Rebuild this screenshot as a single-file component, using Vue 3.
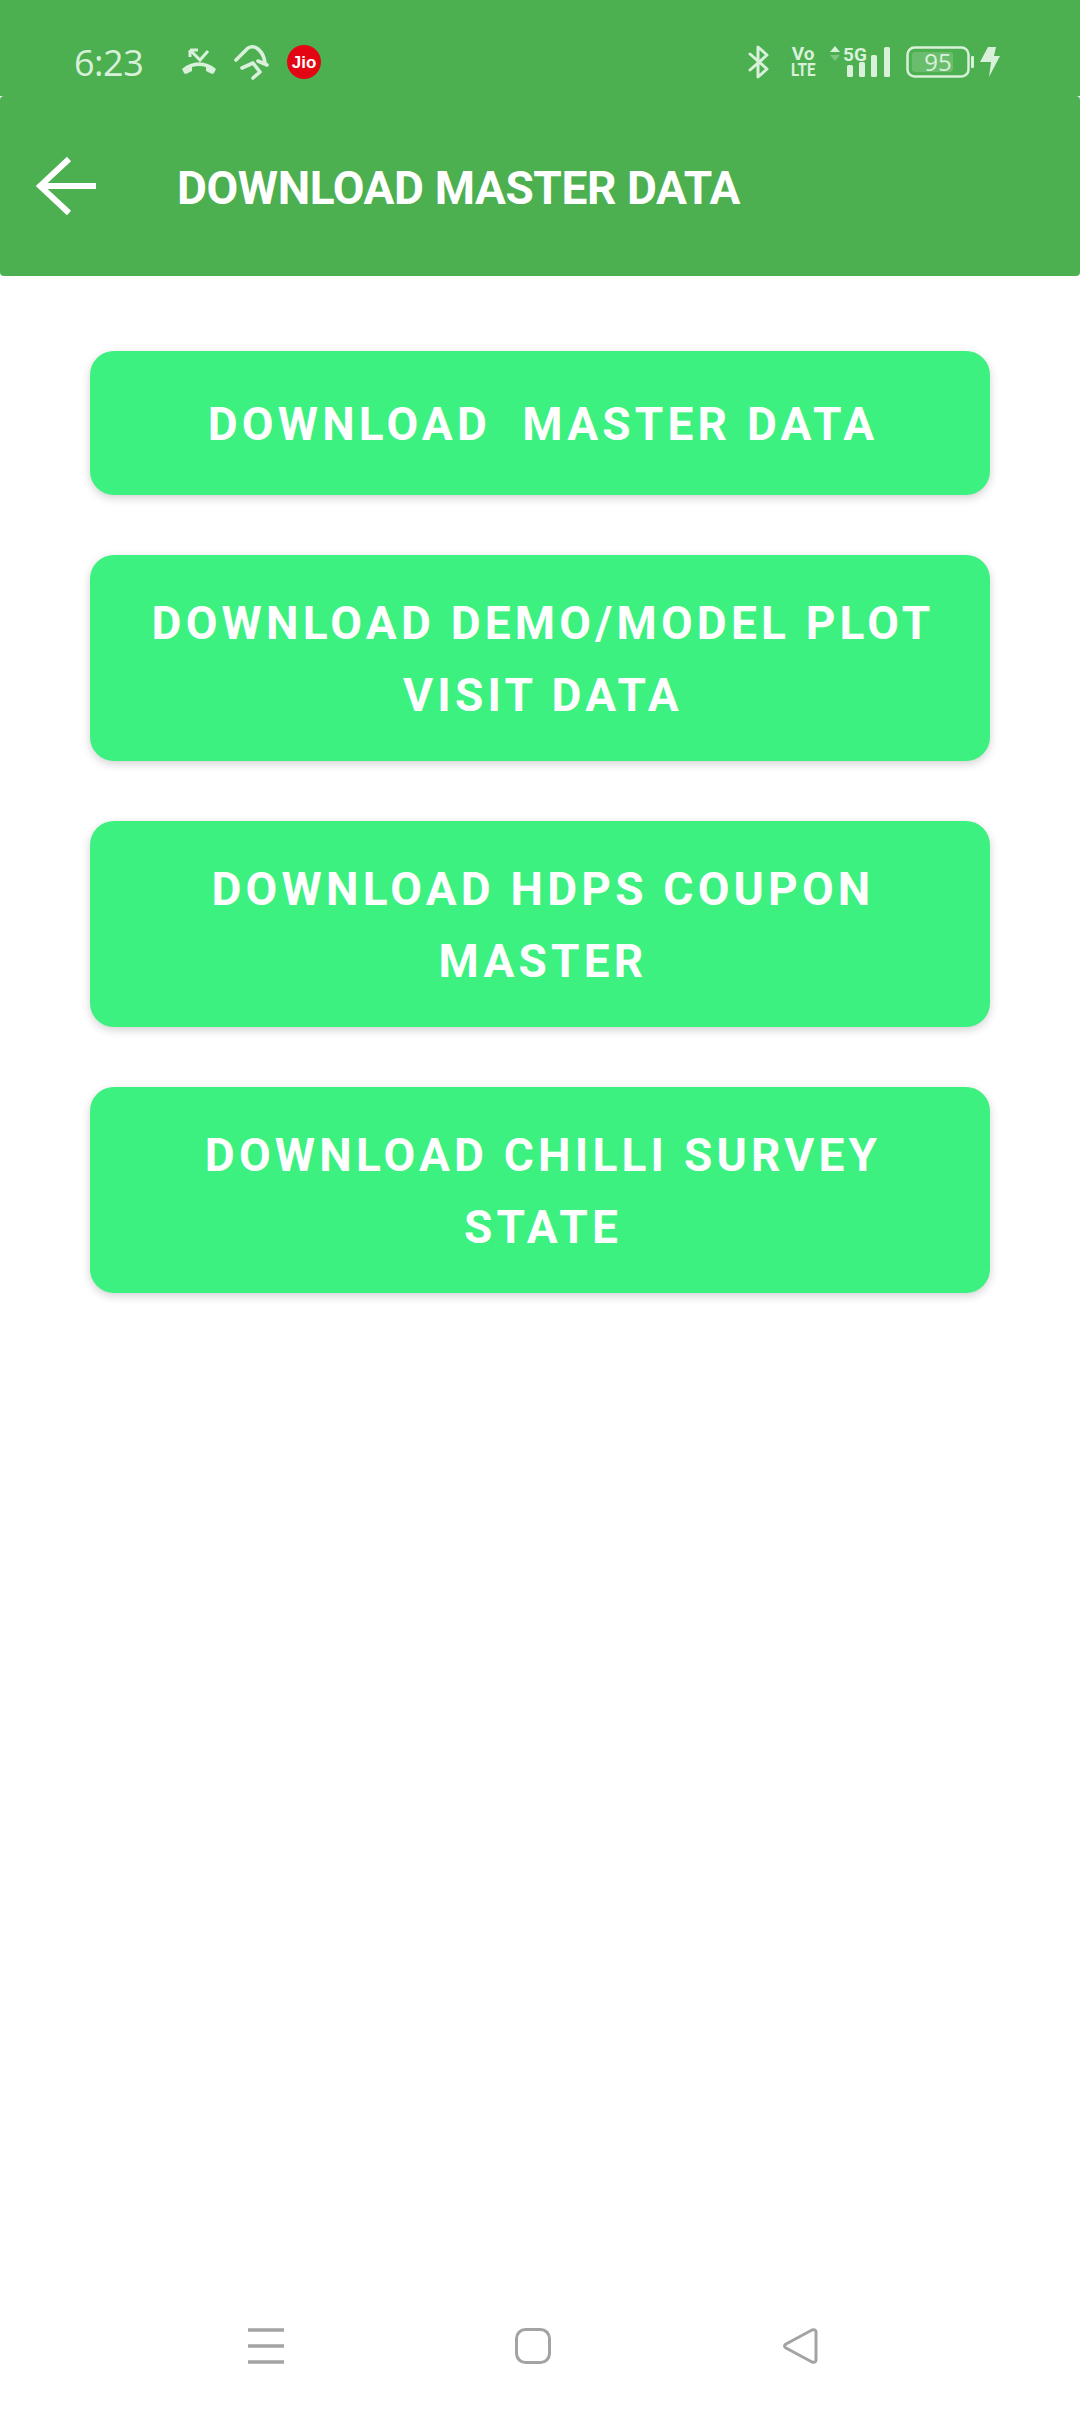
<template>
  <div class="page">
    <header class="header">
      <div class="status">
        <span class="time">6:23</span>
        <svg class="ic-call" width="36" height="28" viewBox="0 0 36 28">
          <path d="M9 2v7M9 2h8M9 2l10 10L27 3" fill="none" stroke="#d9f0da" stroke-width="3" />
          <path d="M1 21c10-9 24-9 34 0l-2 4c-1 1-2 1-3 .5l-5-2.500v-4c-5-1.500-9-1.500-14 0v4l-5 2.500c-1 .5-2 .5-3-.5z" fill="#d9f0da" />
        </svg>
        <svg class="ic-sync" width="36" height="36" viewBox="0 0 36 36">
          <path d="M3 16 15 4q5-3 10 1 6 5 7 14M25 17l9 4M9 24l11-5 7 9-7 6" fill="none" stroke="#d9f0da" stroke-width="3.600" stroke-linecap="round" stroke-linejoin="round" />
        </svg>
        <svg class="ic-jio" width="34" height="34" viewBox="0 0 34 34">
          <circle cx="17" cy="17" r="17" fill="#e30513" />
          <text x="17" y="23" text-anchor="middle">Jio</text>
        </svg>
        <div class="status-right">
          <svg class="ic-bt" width="22" height="34" viewBox="0 0 22 34">
            <path d="M2 9 19 24 10 32V2l9 8L2 25" fill="none" stroke="#d9f0da" stroke-width="3" stroke-linejoin="round" stroke-linecap="round" />
          </svg>
          <div class="volte"><span>Vo</span><span>LTE</span></div>
          <div class="net">
            <svg width="60" height="32" viewBox="0 0 60 32">
              <path d="M0 6 5 0l5 6z" fill="#d9f0da" />
              <path d="M0 9h10l-5 6z" fill="#d9f0da" opacity=".35" />
              <rect x="17" y="19" width="6" height="12" rx="1.500" fill="#d9f0da" />
              <rect x="29" y="16" width="6" height="15" rx="1.500" fill="#d9f0da" />
              <rect x="41" y="9" width="6" height="22" rx="1.500" fill="#d9f0da" />
              <rect x="54" y="1" width="6" height="30" rx="1.500" fill="#d9f0da" />
            </svg>
            <span class="net-label">5G</span>
          </div>
          <div class="batt">
            <svg width="68" height="32" viewBox="0 0 68 32">
              <rect x="1.500" y="1.500" width="61" height="29" rx="7" fill="none" stroke="#d9f0da" stroke-width="2.500" />
              <rect x="6" y="6" width="41" height="20" rx="3" fill="#d9f0da" opacity=".22" />
              <rect x="65" y="10" width="3" height="12" rx="1" fill="#d9f0da" />
            </svg>
            <span class="batt-label">95</span>
          </div>
          <svg class="ic-bolt" width="20" height="30" viewBox="0 0 20 30">
            <path d="M8 0h8l-2 9h6L9 30l2-15H0z" fill="#d9f0da" />
          </svg>
        </div>
      </div>
      <div class="toolbar">
        <svg class="back" width="62" height="60" viewBox="0 0 62 60">
          <path d="M60 30H4M33 3 4 30l29 27" fill="none" stroke="#fff" stroke-width="6" />
        </svg>
        <h1 class="title">DOWNLOAD MASTER DATA</h1>
      </div>
    </header>

    <main class="list">
      <button v-for="item in buttons" :key="item" class="btn">{{ item }}</button>
    </main>

    <nav class="navbar">
      <svg width="36" height="36" viewBox="0 0 36 36">
        <path d="M0 2h36M0 18h36M0 34h36" stroke="#a3a3a3" stroke-width="3.500" />
      </svg>
      <svg width="36" height="36" viewBox="0 0 36 36">
        <rect x="1.500" y="1.500" width="33" height="33" rx="9" fill="none" stroke="#a3a3a3" stroke-width="3" />
      </svg>
      <svg width="36" height="36" viewBox="0 0 36 36">
        <path d="M30 2 4 16q-3 2 0 4l26 14q4 1 4-2V4q0-3-4-2z" fill="none" stroke="#a3a3a3" stroke-width="3" stroke-linejoin="round" />
      </svg>
    </nav>
  </div>
</template>

<script setup>
const buttons = [
  "DOWNLOAD  MASTER DATA",
  "DOWNLOAD DEMO/MODEL PLOT VISIT DATA",
  "DOWNLOAD HDPS COUPON MASTER",
  "DOWNLOAD CHILLI SURVEY STATE",
];
</script>

<style>
html,
body {
  margin: 0;
  background: #fff;
}
</style>

<style scoped>
.page {
  height: 2412px;
  display: flex;
  flex-direction: column;
  background: #fff;
  font-family: Roboto, "Liberation Sans", sans-serif;
  overflow: hidden;
}

.header {
  background: #fff;
}

.status {
  height: 96px;
  box-sizing: border-box;
  padding: 28px 80px 0 74px;
  display: flex;
  align-items: center;
  background: #4caf50;
}

.time {
  width: 107px;
  font-family: "Open Sans", sans-serif;
  font-size: 36px;
  color: #d9f0da;
  letter-spacing: -0.5px;
}

.ic-sync {
  margin-left: 16px;
}

.ic-jio {
  margin-left: 18px;
}

.ic-jio text {
  font-family: "Liberation Sans", sans-serif;
  font-weight: 700;
  font-size: 17px;
  fill: #fff;
}

.status-right {
  margin-left: auto;
  display: flex;
  align-items: center;
}

.volte {
  margin-left: 21px;
  width: 24px;
  display: flex;
  flex-direction: column;
  align-items: center;
  font-size: 19px;
  line-height: 16px;
  font-weight: 700;
  color: #d9f0da;
}

.volte span:last-child {
  transform: scaleX(0.8);
}

.net,
.batt {
  position: relative;
  display: flex;
}

.net {
  margin-left: 15px;
}

.net-label {
  position: absolute;
  left: 13px;
  top: -1px;
  font-weight: 700;
  font-size: 19px;
  line-height: 19px;
  color: #d9f0da;
}

.batt {
  margin-left: 16px;
}

.batt-label {
  position: absolute;
  left: 0;
  width: 64px;
  top: 0;
  text-align: center;
  font-family: "Open Sans", sans-serif;
  font-size: 24px;
  line-height: 32px;
  color: #d9f0da;
}

.ic-bolt {
  margin-left: 6px;
}

.toolbar {
  height: 180px;
  display: flex;
  align-items: center;
  padding-left: 36px;
  background: #4caf50;
  border-radius: 4px;
}

.title {
  margin: 3px 0 0 79px;
  font-size: 46px;
  font-weight: 700;
  color: #fff;
  letter-spacing: -0.4px;
  white-space: nowrap;
}

.list {
  display: flex;
  flex-direction: column;
  gap: 60px;
  padding: 75px 90px 0;
}

.btn {
  min-height: 144px;
  padding: 32px 47px 30px 53px;
  border: 0;
  border-radius: 24px;
  background: #3cf180;
  box-shadow: 0 3px 10px rgba(0, 0, 0, 0.18);
  color: #fff;
  font-family: inherit;
  font-size: 46px;
  font-weight: 700;
  line-height: 72px;
  letter-spacing: 4.2px;
  text-align: center;
  white-space: pre-wrap;
}

.navbar {
  margin-top: auto;
  height: 84px;
  box-sizing: border-box;
  display: flex;
  padding-left: 248px;
  gap: 231px;
  align-items: flex-start;
}
</style>
